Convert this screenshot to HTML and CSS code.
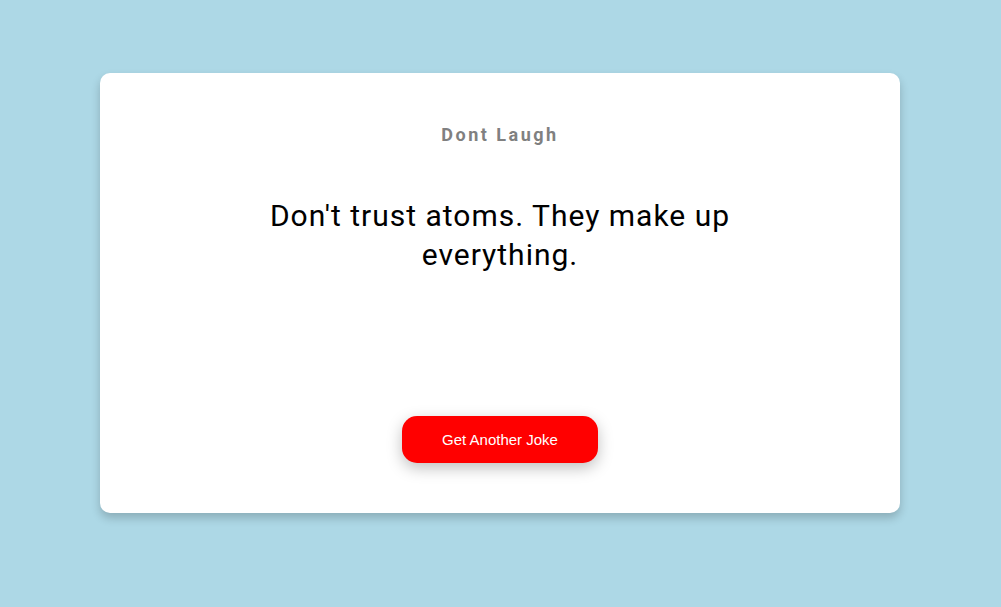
FILE: index.html
```html
<!DOCTYPE html>
<html lang="en">
<head>
<meta charset="utf-8">
<title>Dont Laugh</title>
<link rel="stylesheet" href="styles.css">
</head>
<body>
<main class="page">
  <section class="card">
    <h3 class="title">Dont Laugh</h3>
    <p class="joke">Don't trust atoms. They make up everything.</p>
    <button class="btn" type="button">Get Another Joke</button>
  </section>
</main>
</body>
</html>
```
FILE: styles.css
```css
html, body {
  margin: 0;
  padding: 0;
}
body {
  background: #add8e6;
  font-family: Roboto, "Liberation Sans", sans-serif;
  min-height: 607px;
}
.page {
  width: 1000px;
  padding-top: 73px;
}
.card {
  box-sizing: border-box;
  width: 800px;
  margin: 0 auto;
  height: 440px;
  background: #fff;
  border-radius: 10px;
  box-shadow: 0 5px 10px rgba(0, 0, 0, 0.2);
  padding: 51px 50px 50px;
  display: flex;
  flex-direction: column;
  align-items: center;
  text-align: center;
}
.title {
  margin: 0;
  font-size: 18px;
  font-weight: 700;
  color: #808080;
  letter-spacing: 2.5px;
  line-height: 21px;
}
.joke {
  margin: 51px 0 0;
  max-width: 600px;
  font-size: 30px;
  line-height: 39px;
  letter-spacing: 1px;
  color: #000;
}
.btn {
  margin-top: auto;
  width: 196px;
  height: 47px;
  border: none;
  border-radius: 15px;
  background: #ff0000;
  color: #fff;
  font-family: "Liberation Sans", Arial, sans-serif;
  font-size: 15px;
  box-shadow: 0 5px 15px rgba(0, 0, 0, 0.25);
  cursor: pointer;
}
```
